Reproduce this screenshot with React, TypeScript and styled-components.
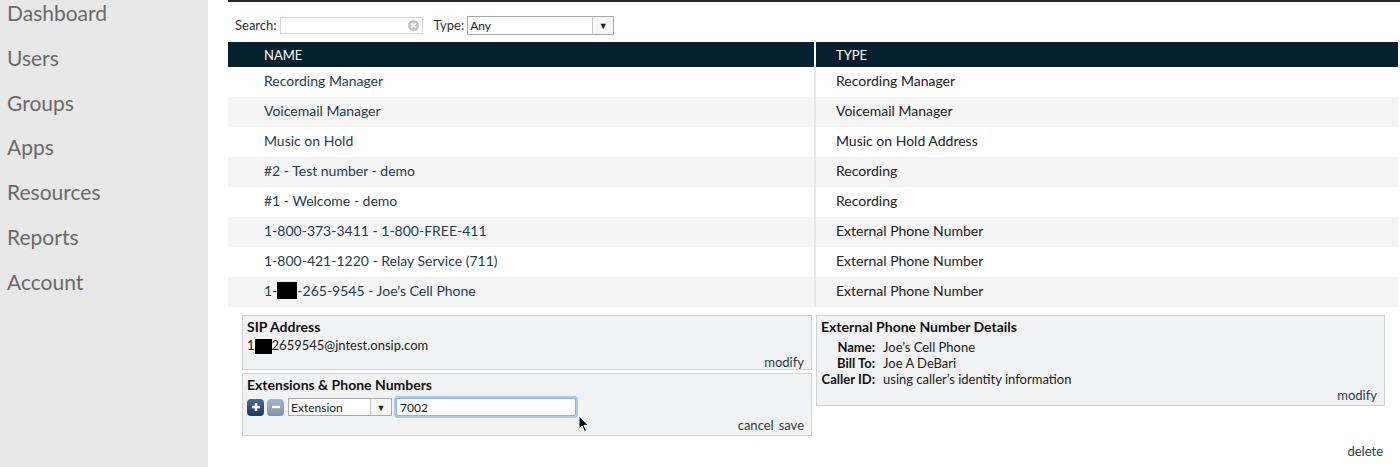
import styled, { createGlobalStyle } from 'styled-components';

const GlobalStyle = createGlobalStyle`
  html, body {
    margin: 0;
    padding: 0;
    background: #fff;
    overflow: hidden;
  }
  body {
    font-family: Lato, "Open Sans", "Liberation Sans", sans-serif;
    color: #222;
  }
`;

const navItems = ['Dashboard', 'Users', 'Groups', 'Apps', 'Resources', 'Reports', 'Account'];

type Row = { name: React.ReactNode; type: string };

const Redact = styled.span<{ $w: number; $h?: number }>`
  display: inline-block;
  width: ${({ $w }) => $w}px;
  height: ${({ $h }) => $h ?? 17}px;
  background: #000;
  vertical-align: -4px;
`;

const rows: Row[] = [
  { name: 'Recording Manager', type: 'Recording Manager' },
  { name: 'Voicemail Manager', type: 'Voicemail Manager' },
  { name: 'Music on Hold', type: 'Music on Hold Address' },
  { name: '#2 - Test number - demo', type: 'Recording' },
  { name: '#1 - Welcome - demo', type: 'Recording' },
  { name: '1-800-373-3411 - 1-800-FREE-411', type: 'External Phone Number' },
  { name: '1-800-421-1220 - Relay Service (711)', type: 'External Phone Number' },
  {
    name: (
      <>
        1-<Redact $w={20} />-265-9545 - Joe’s Cell Phone
      </>
    ),
    type: 'External Phone Number',
  },
];

const App = () => {
  return (
    <>
      <GlobalStyle />
      <Page>
        <Sidebar>
          <NavList>
            {navItems.map((item) => (
              <NavItem key={item}>{item}</NavItem>
            ))}
          </NavList>
        </Sidebar>
        <Main>
          <Content>
            <Filters>
              <Label>Search:</Label>
              <SearchBox>
                <ClearIcon width="11" height="11" viewBox="0 0 11 11">
                  <circle cx="5.5" cy="5.5" r="5.5" fill="#c4c4c4" />
                  <path d="M3.4 3.4 L7.6 7.6 M7.6 3.4 L3.4 7.6" stroke="#fff" strokeWidth="1.6" />
                </ClearIcon>
              </SearchBox>
              <Label style={{ marginLeft: 8 }}>Type:</Label>
              <Select $w={147}>
                <SelectValue>Any</SelectValue>
                <SelectArrow>▼</SelectArrow>
              </Select>
            </Filters>
            <Table>
              <HeadRow>
                <HeadCell $first>NAME</HeadCell>
                <HeadCell>TYPE</HeadCell>
              </HeadRow>
              {rows.map((row, i) => (
                <BodyRow key={i} $odd={i % 2 === 1}>
                  <NameCell>{row.name}</NameCell>
                  <TypeCell>{row.type}</TypeCell>
                </BodyRow>
              ))}
            </Table>
            <Details>
              <Column>
                <Box $h={55}>
                  <BoxTitle>SIP Address</BoxTitle>
                  <BoxLine>
                    1<Redact $w={17} $h={15} />2659545@jntest.onsip.com
                  </BoxLine>
                  <BoxFooter $pb={6}>
                    <Link>modify</Link>
                  </BoxFooter>
                </Box>
                <Box $h={63}>
                  <BoxTitle>Extensions &amp; Phone Numbers</BoxTitle>
                  <Controls>
                    <IconButton $variant="add">
                      <svg width="10" height="10" viewBox="0 0 10 10">
                        <path d="M5 1 V9 M1 5 H9" stroke="#fff" strokeWidth="2.4" />
                      </svg>
                    </IconButton>
                    <IconButton $variant="remove">
                      <svg width="10" height="10" viewBox="0 0 10 10">
                        <path d="M1 5 H9" stroke="#fff" strokeWidth="2.4" />
                      </svg>
                    </IconButton>
                    <Select $w={104} $h={18}>
                      <SelectValue>Extension</SelectValue>
                      <SelectArrow>▼</SelectArrow>
                    </Select>
                    <FocusInput>7002</FocusInput>
                    <Cursor width="12" height="18" viewBox="0 0 12 18">
                      <path
                        d="M1 1 L1 14 L4 11 L6.5 16.5 L8.5 15.6 L6 10.3 L10.2 10.3 Z"
                        fill="#000"
                        stroke="#fff"
                        strokeWidth="1"
                      />
                    </Cursor>
                  </Controls>
                  <BoxFooter $pb={2}>
                    <Link>cancel</Link>
                    <Link>save</Link>
                  </BoxFooter>
                </Box>
              </Column>
              <Column>
                <Box $h={91}>
                  <BoxTitle>External Phone Number Details</BoxTitle>
                  <DefList>
                    <dt>Name:</dt>
                    <dd>Joe’s Cell Phone</dd>
                    <dt>Bill To:</dt>
                    <dd>Joe A DeBari</dd>
                    <dt>Caller ID:</dt>
                    <dd>using caller’s identity information</dd>
                  </DefList>
                  <BoxFooter $pb={4}>
                    <Link>modify</Link>
                  </BoxFooter>
                </Box>
              </Column>
            </Details>
            <DeleteRow>
              <Link>delete</Link>
            </DeleteRow>
          </Content>
        </Main>
      </Page>
    </>
  );
};

export default App;

const Page = styled.div`
  display: flex;
  height: 467px;
  overflow: hidden;
`;

const Sidebar = styled.nav`
  width: 208px;
  flex-shrink: 0;
  background: #e8e8e8;
`;

const NavList = styled.ul`
  list-style: none;
  margin: -9px 0 0;
  padding: 0 0 0 7px;
`;

const NavItem = styled.li`
  font-size: 21px;
  line-height: 44.8px;
  color: #6a6a6a;
  font-weight: 400;
`;

const Main = styled.main`
  flex: 1;
  padding-left: 20px;
`;

const Content = styled.div`
  border-top: 2px solid #1c2a35;
`;

const Filters = styled.div`
  display: flex;
  align-items: center;
  height: 34px;
  padding: 6px 0 0 7px;
  gap: 3px;
`;

const Label = styled.span`
  font-size: 13px;
  color: #333;
`;

const SearchBox = styled.div`
  width: 138px;
  height: 15px;
  border: 1px solid #d6d6d6;
  background: #fff;
  display: flex;
  align-items: center;
  justify-content: flex-end;
  padding-right: 3px;
`;

const ClearIcon = styled.svg`
  display: block;
`;

const Select = styled.div<{ $w: number; $h?: number }>`
  width: ${({ $w }) => $w}px;
  height: ${({ $h }) => $h ?? 19}px;
  box-sizing: border-box;
  border: 1px solid #a9a9a9;
  background: #fff;
  display: flex;
  align-items: stretch;
  font-size: 12px;
  color: #222;
`;

const SelectValue = styled.span`
  flex: 1;
  display: flex;
  align-items: center;
  padding-left: 2px;
`;

const SelectArrow = styled.span`
  width: 20px;
  border-left: 1px solid #c8c8c8;
  background: #f6f6f6;
  display: flex;
  align-items: center;
  justify-content: center;
  font-size: 9px;
  color: #222;
`;

const Table = styled.div`
  margin-right: 2px;
`;

const HeadRow = styled.div`
  display: grid;
  grid-template-columns: 588px 1fr;
  height: 25px;
  background: #07202f;
`;

const HeadCell = styled.div<{ $first?: boolean }>`
  display: flex;
  align-items: center;
  color: #fff;
  font-size: 13px;
  padding-left: ${({ $first }) => ($first ? 36 : 20)}px;
  border-right: ${({ $first }) => ($first ? '2px solid #fff' : 'none')};
`;

const BodyRow = styled.div<{ $odd: boolean }>`
  display: grid;
  grid-template-columns: 588px 1fr;
  height: 30px;
  background: ${({ $odd }) => ($odd ? '#f5f5f5' : '#fff')};
  font-size: 14px;
`;

const NameCell = styled.div`
  display: flex;
  align-items: center;
  padding: 0 0 4px 36px;
  color: #243d52;
  border-right: 2px solid #e6e6e6;
  white-space: pre;
`;

const TypeCell = styled.div`
  display: flex;
  align-items: center;
  padding: 0 0 4px 20px;
  color: #222;
`;

const Details = styled.div`
  display: grid;
  grid-template-columns: 570px 569px;
  gap: 4px;
  margin: 8px 0 0 14px;
  align-items: start;
`;

const Column = styled.div`
  display: flex;
  flex-direction: column;
  gap: 3px;
`;

const Box = styled.section<{ $h: number }>`
  position: relative;
  height: ${({ $h }) => $h}px;
  box-sizing: border-box;
  border: 1px solid #d2d2d2;
  background: #f1f2f4;
  padding: 3px 7px 0 4px;
  display: flex;
  flex-direction: column;
  font-size: 13px;
`;

const BoxTitle = styled.h3`
  margin: 0;
  font-size: 14px;
  font-weight: 700;
  line-height: 16px;
  color: #111;
`;

const BoxLine = styled.div`
  margin-top: 2px;
  line-height: 16px;
  white-space: pre;
`;

const BoxFooter = styled.div<{ $pb: number }>`
  margin-top: auto;
  display: flex;
  justify-content: flex-end;
  gap: 5px;
  line-height: 16px;
  padding-bottom: ${({ $pb }) => $pb}px;
`;

const Link = styled.span`
  font-size: 13px;
  color: #2b3e4d;
  cursor: pointer;
`;

const Controls = styled.div`
  position: relative;
  display: flex;
  align-items: center;
  gap: 3px;
  margin-top: 5px;
`;

const IconButton = styled.span<{ $variant: 'add' | 'remove' }>`
  width: 17px;
  height: 17px;
  border-radius: 4px;
  display: flex;
  align-items: center;
  justify-content: center;
  background: ${({ $variant }) =>
    $variant === 'add'
      ? 'linear-gradient(#4f6b99, #1d3466)'
      : 'linear-gradient(#a9b4c6, #8391a8)'};
  margin-right: ${({ $variant }) => ($variant === 'remove' ? 1 : 0)}px;
`;

const FocusInput = styled.div`
  width: 180px;
  height: 18px;
  box-sizing: border-box;
  border: 1px solid #8db5ea;
  box-shadow: 0 0 0 2px #a9c9f3;
  border-radius: 2px;
  background: #fff;
  margin-left: 1px;
  font-size: 12px;
  padding-left: 3px;
  display: flex;
  align-items: center;
`;

const Cursor = styled.svg`
  position: absolute;
  left: 331px;
  top: 17px;
`;

const DefList = styled.dl`
  display: grid;
  grid-template-columns: 54px 1fr;
  column-gap: 8px;
  margin: 4px 0 0;
  line-height: 16px;
  dt {
    text-align: right;
    font-weight: 700;
    color: #111;
    white-space: nowrap;
  }
  dd {
    margin: 0;
  }
`;

const DeleteRow = styled.div`
  display: flex;
  justify-content: flex-end;
  padding: 7px 17px 0 0;
`;
